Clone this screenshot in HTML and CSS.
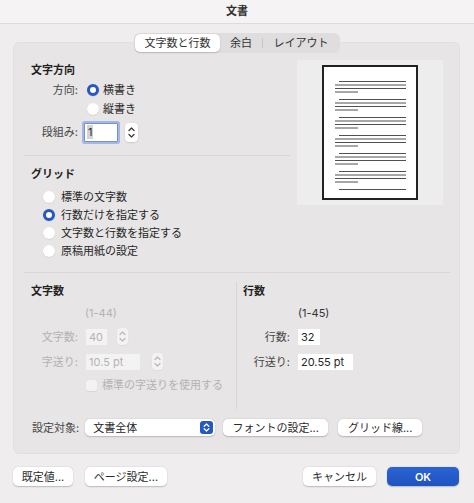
FILE: index.html
```html
<!DOCTYPE html>
<html lang="ja">
<head>
    <meta charset="UTF-8">
    <meta name="viewport" content="width=device-width, initial-scale=1.0">
    <title>文書</title>
    <link rel="stylesheet" href="styles.css">
</head>
<body>
    <div class="titlebar">文書</div>

    <!-- タブ -->
    <div class="tabs">
        <div class="tab tab-active">文字数と行数</div>
        <div class="tab tab-margin">余白</div>
        <span class="tab-divider"></span>
        <div class="tab tab-layout">レイアウト</div>
    </div>

    <div class="panel">
        <div class="upper">
            <div class="upper-left">
                <!-- 文字方向 -->
                <section class="sec-dir">
                    <h3>文字方向</h3>
                    <div class="form-row first">
                        <span class="lbl">方向:</span>
                        <span class="radio radio-on"></span>
                        <span class="opt">横書き</span>
                    </div>
                    <div class="form-row">
                        <span class="lbl"></span>
                        <span class="radio"></span>
                        <span class="opt">縦書き</span>
                    </div>
                    <div class="form-row cols-row">
                        <span class="lbl">段組み:</span>
                        <span class="field field-focus"><span class="sel">1</span></span>
                        <span class="stepper stepper-cols">
                            <svg width="13" height="19" viewBox="0 0 13 19"><path d="M4 7.5 L6.5 5 L9 7.5" fill="none" stroke="#3a3a3a" stroke-width="1.3" stroke-linecap="round" stroke-linejoin="round"/><path d="M4 11.5 L6.5 14 L9 11.5" fill="none" stroke="#3a3a3a" stroke-width="1.3" stroke-linecap="round" stroke-linejoin="round"/></svg>
                        </span>
                    </div>
                </section>

                <hr class="sep-short">

                <!-- グリッド -->
                <section class="sec-grid">
                    <h3>グリッド</h3>
                    <div class="radio-list">
                        <div class="radio-item"><span class="radio"></span><span class="opt">標準の文字数</span></div>
                        <div class="radio-item"><span class="radio radio-on"></span><span class="opt">行数だけを指定する</span></div>
                        <div class="radio-item"><span class="radio"></span><span class="opt">文字数と行数を指定する</span></div>
                        <div class="radio-item"><span class="radio"></span><span class="opt">原稿用紙の設定</span></div>
                    </div>
                </section>
            </div>

            <!-- プレビュー -->
            <div class="preview">
                <div class="page">
                    <svg width="92" height="131" viewBox="0 0 92 131">
                        <g stroke="#505050" stroke-width="1">
                            <path d="M15 14.5 H82 M11 18 H82 M11 21.5 H82 M11 25 H34"/>
                            <path d="M15 32.5 H82 M11 36 H82 M11 39.5 H82 M11 43 H34"/>
                            <path d="M15 50.5 H82 M11 54 H82 M11 57.5 H82 M11 61 H34"/>
                            <path d="M15 68.5 H82 M11 72 H82 M11 75.5 H82 M11 79 H34"/>
                            <path d="M15 86.5 H82 M11 90 H82 M11 93.5 H82 M11 97 H34"/>
                            <path d="M15 104.5 H82 M11 108 H82 M11 111.5 H82 M11 115 H34"/>
                            <path d="M15 122.5 H82"/>
                        </g>
                    </svg>
                </div>
            </div>
        </div>

        <hr class="sep-wide">

        <div class="lower">
            <!-- 文字数 -->
            <div class="lower-col">
                <h3>文字数</h3>
                <div class="range disabled">(1-44)</div>
                <div class="num-row">
                    <span class="lbl disabled">文字数:</span>
                    <span class="field field-off w-chars">40</span>
                    <span class="stepper stepper-off stepper-chars">
                        <svg width="11" height="17" viewBox="0 0 11 17"><path d="M3 6.5 L5.5 4 L8 6.5" fill="none" stroke="#b9b7b8" stroke-width="1.2" stroke-linecap="round" stroke-linejoin="round"/><path d="M3 10.5 L5.5 13 L8 10.5" fill="none" stroke="#b9b7b8" stroke-width="1.2" stroke-linecap="round" stroke-linejoin="round"/></svg>
                    </span>
                </div>
                <div class="num-row">
                    <span class="lbl disabled">字送り:</span>
                    <span class="field field-off w-pitch">10.5 pt</span>
                    <span class="stepper stepper-off stepper-pitch">
                        <svg width="11" height="17" viewBox="0 0 11 17"><path d="M3 6.5 L5.5 4 L8 6.5" fill="none" stroke="#b9b7b8" stroke-width="1.2" stroke-linecap="round" stroke-linejoin="round"/><path d="M3 10.5 L5.5 13 L8 10.5" fill="none" stroke="#b9b7b8" stroke-width="1.2" stroke-linecap="round" stroke-linejoin="round"/></svg>
                    </span>
                </div>
                <div class="check-row">
                    <span class="checkbox"></span>
                    <span class="disabled">標準の字送りを使用する</span>
                </div>
            </div>

            <!-- 行数 -->
            <div class="lower-col lower-right">
                <h3>行数</h3>
                <div class="range">(1-45)</div>
                <div class="num-row">
                    <span class="lbl">行数:</span>
                    <span class="field w-lines">32</span>
                </div>
                <div class="num-row">
                    <span class="lbl">行送り:</span>
                    <span class="field w-lead">20.55 pt</span>
                </div>
            </div>
        </div>

        <div class="target-row">
            <span class="target-lbl">設定対象:</span>
            <span class="popup">
                <span>文書全体</span>
                <span class="popup-arrows">
                    <svg width="13" height="13" viewBox="0 0 13 13"><path d="M4.2 5.2 L6.5 3 L8.8 5.2" fill="none" stroke="#fff" stroke-width="1.3" stroke-linecap="round" stroke-linejoin="round"/><path d="M4.2 7.8 L6.5 10 L8.8 7.8" fill="none" stroke="#fff" stroke-width="1.3" stroke-linecap="round" stroke-linejoin="round"/></svg>
                </span>
            </span>
            <button class="btn btn-font">フォントの設定...</button>
            <button class="btn btn-grid">グリッド線...</button>
        </div>
    </div>

    <div class="footer">
        <button class="btn btn-default">既定値...</button>
        <button class="btn btn-page">ページ設定...</button>
        <button class="btn btn-cancel">キャンセル</button>
        <button class="btn btn-ok">OK</button>
    </div>
</body>
</html>
```

FILE: styles.css
```css
body {
    font-family: Inter, "Noto Sans CJK JP", sans-serif;
    font-size: 11px;
    line-height: 14px;
    color: #262626;
    margin: 0;
    padding: 0;
    width: 474px;
    height: 503px;
    overflow: hidden;
    background-color: #efedee;
}

h3 {
    margin: 0;
    font-size: 11px;
    line-height: 14px;
    font-weight: 700;
    color: #1f1f1f;
}

hr {
    border: none;
    height: 1px;
    background-color: #d7d5d6;
    margin: 0;
}

.titlebar {
    height: 23px;
    line-height: 23px;
    text-align: center;
    font-weight: 600;
    color: #2e2e2e;
    background-color: #f5f3f4;
    border-bottom: 1px solid #dddbdc;
}

/* タブ */
.tabs {
    position: relative;
    z-index: 1;
    display: flex;
    align-items: center;
    width: fit-content;
    margin: 9px auto 0;
    padding: 1px;
    border-radius: 6px;
    background-color: #dfddde;
}

.tab {
    height: 18px;
    line-height: 18px;
    text-align: center;
    color: #333;
}

.tab-active {
    width: 85px;
    background-color: #fff;
    border-radius: 5px;
    box-shadow: 0 0.5px 1.5px rgba(0, 0, 0, 0.18);
}

.tab-margin {
    width: 42px;
}

.tab-layout {
    width: 76px;
}

.tab-divider {
    width: 1px;
    height: 10px;
    background-color: #c6c4c5;
}

/* パネル */
.panel {
    margin: -11px 14px 0 13px;
    padding: 18px 0 18px;
    background-color: #e7e5e6;
    border-radius: 6px;
    box-shadow: inset 0 0 0 1px rgba(0, 0, 0, 0.025);
}

.upper {
    display: flex;
}

.upper-left {
    width: 284px;
    padding-top: 3px;
}

.sec-dir h3,
.sec-grid h3 {
    margin-left: 18px;
}

.form-row {
    display: flex;
    align-items: center;
    height: 19px;
    padding-left: 18px;
}

.form-row.first {
    margin-top: 3px;
}

.lbl {
    width: 47px;
    flex-shrink: 0;
    white-space: nowrap;
    text-align: right;
    color: #454545;
}

.opt {
    color: #262626;
}

.radio {
    width: 12px;
    height: 12px;
    border-radius: 50%;
    background-color: #fff;
    box-shadow: 0 0.5px 1px rgba(0, 0, 0, 0.15);
    box-sizing: border-box;
    flex-shrink: 0;
}

.radio-on {
    background-color: #fff;
    border: 3.5px solid #2557c4;
}

.form-row .radio {
    margin: 0 4px 0 9px;
}

.cols-row {
    height: 22px;
    margin-top: 3px;
}

.field {
    display: inline-block;
    box-sizing: border-box;
    height: 16px;
    line-height: 16px;
    padding-left: 3px;
    background-color: #fff;
    color: #262626;
    margin-left: 8px;
    white-space: nowrap;
}

.field-focus {
    width: 34px;
    height: 19px;
    line-height: 17px;
    margin-left: 6px;
    padding-left: 2px;
    border: 1px solid #7391d2;
    box-shadow: 0 0 0 2px #a5b8e2;
    border-radius: 1px;
}

.sel {
    background-color: #d3d3d3;
    padding: 0 1px;
}

.stepper {
    display: inline-flex;
    background-color: #fff;
    border-radius: 4px;
    box-shadow: 0 0.5px 1.5px rgba(0, 0, 0, 0.2);
}

.stepper-cols {
    margin-left: 7px;
}

.sep-short {
    margin: 12px 0 0 11px;
    width: 266px;
}

.sec-grid h3 {
    margin-top: 11px;
}

.radio-list {
    margin-top: 7px;
}

.radio-item {
    display: flex;
    align-items: center;
    height: 18px;
    padding-left: 30px;
}

.radio-item .radio {
    margin-right: 6px;
}

/* プレビュー */
.preview {
    width: 146px;
    height: 145px;
    background-color: #eeeded;
    display: flex;
    justify-content: center;
    align-items: center;
}

.page {
    width: 92px;
    height: 131px;
    border: 2px solid #222;
    background-color: #fff;
}

.page svg {
    display: block;
}

.sep-wide {
    margin: 12px 10px 0 11px;
}

/* 文字数・行数 */
.lower {
    display: grid;
    grid-template-columns: 223px 1fr;
}

.lower-col {
    padding: 11px 0 17px 18px;
}

.lower-right {
    margin-top: 9px;
    padding: 2px 0 0 6px;
    border-left: 1px solid #d7d5d6;
}

.range {
    margin-top: 8px;
    padding-left: 55px;
    color: #333;
}

.lower-col:first-child .range {
    padding-left: 54px;
}

.disabled {
    color: #b4b2b3;
}

.num-row {
    display: flex;
    align-items: center;
    height: 17px;
    margin-top: 8px;
}

.field-off {
    background-color: #f4f3f3;
    color: #b4b2b3;
}

.w-chars {
    width: 21px;
}

.w-pitch {
    width: 54px;
}

.w-lines {
    width: 22px;
}

.w-lead {
    width: 55px;
}

.stepper-off {
    background-color: #f4f3f3;
    box-shadow: 0 0.5px 1px rgba(0, 0, 0, 0.08);
}

.stepper-chars {
    margin-left: 10px;
}

.stepper-pitch {
    margin-left: 12px;
}

.check-row {
    display: flex;
    align-items: center;
    height: 14px;
    margin-top: 8px;
    padding-left: 55px;
}

.checkbox {
    width: 11px;
    height: 11px;
    border-radius: 3px;
    background-color: #f4f3f3;
    box-shadow: 0 0.5px 1px rgba(0, 0, 0, 0.08);
    margin-right: 5px;
}

/* 設定対象 */
.target-row {
    display: flex;
    align-items: center;
    height: 17px;
    margin-top: 10px;
    padding-left: 19px;
}

.target-lbl {
    white-space: nowrap;
    color: #454545;
}

.popup {
    display: flex;
    align-items: center;
    justify-content: space-between;
    box-sizing: border-box;
    width: 130px;
    height: 17px;
    margin-left: 6px;
    padding: 0 2px 0 8px;
    background-color: #fff;
    border-radius: 5px;
    box-shadow: 0 0.5px 1.5px rgba(0, 0, 0, 0.2);
}

.popup-arrows {
    display: flex;
    width: 13px;
    height: 13px;
    border-radius: 3px;
    background-color: #2458c6;
}

.btn {
    font-family: inherit;
    font-size: 11px;
    line-height: 14px;
    color: #2a2a2a;
    height: 17px;
    padding: 0;
    border: none;
    border-radius: 5px;
    background-color: #fff;
    box-shadow: 0 0.5px 1.5px rgba(0, 0, 0, 0.22);
    white-space: nowrap;
}

.btn-font {
    width: 105px;
    margin-left: 8px;
}

.btn-grid {
    width: 84px;
    margin-left: 10px;
}

/* 下のボタン */
.footer {
    display: flex;
    align-items: center;
    margin-top: 13px;
    padding: 0 15px 0 13px;
}

.footer .btn {
    height: 19px;
}

.btn-default {
    width: 60px;
}

.btn-page {
    width: 82px;
    margin-left: 12px;
}

.btn-cancel {
    width: 73px;
    margin-left: auto;
}

.btn-ok {
    width: 72px;
    margin-left: 11px;
    color: #fff;
    font-weight: 600;
    background: linear-gradient(#2a63d4, #1f54c0);
}
```
